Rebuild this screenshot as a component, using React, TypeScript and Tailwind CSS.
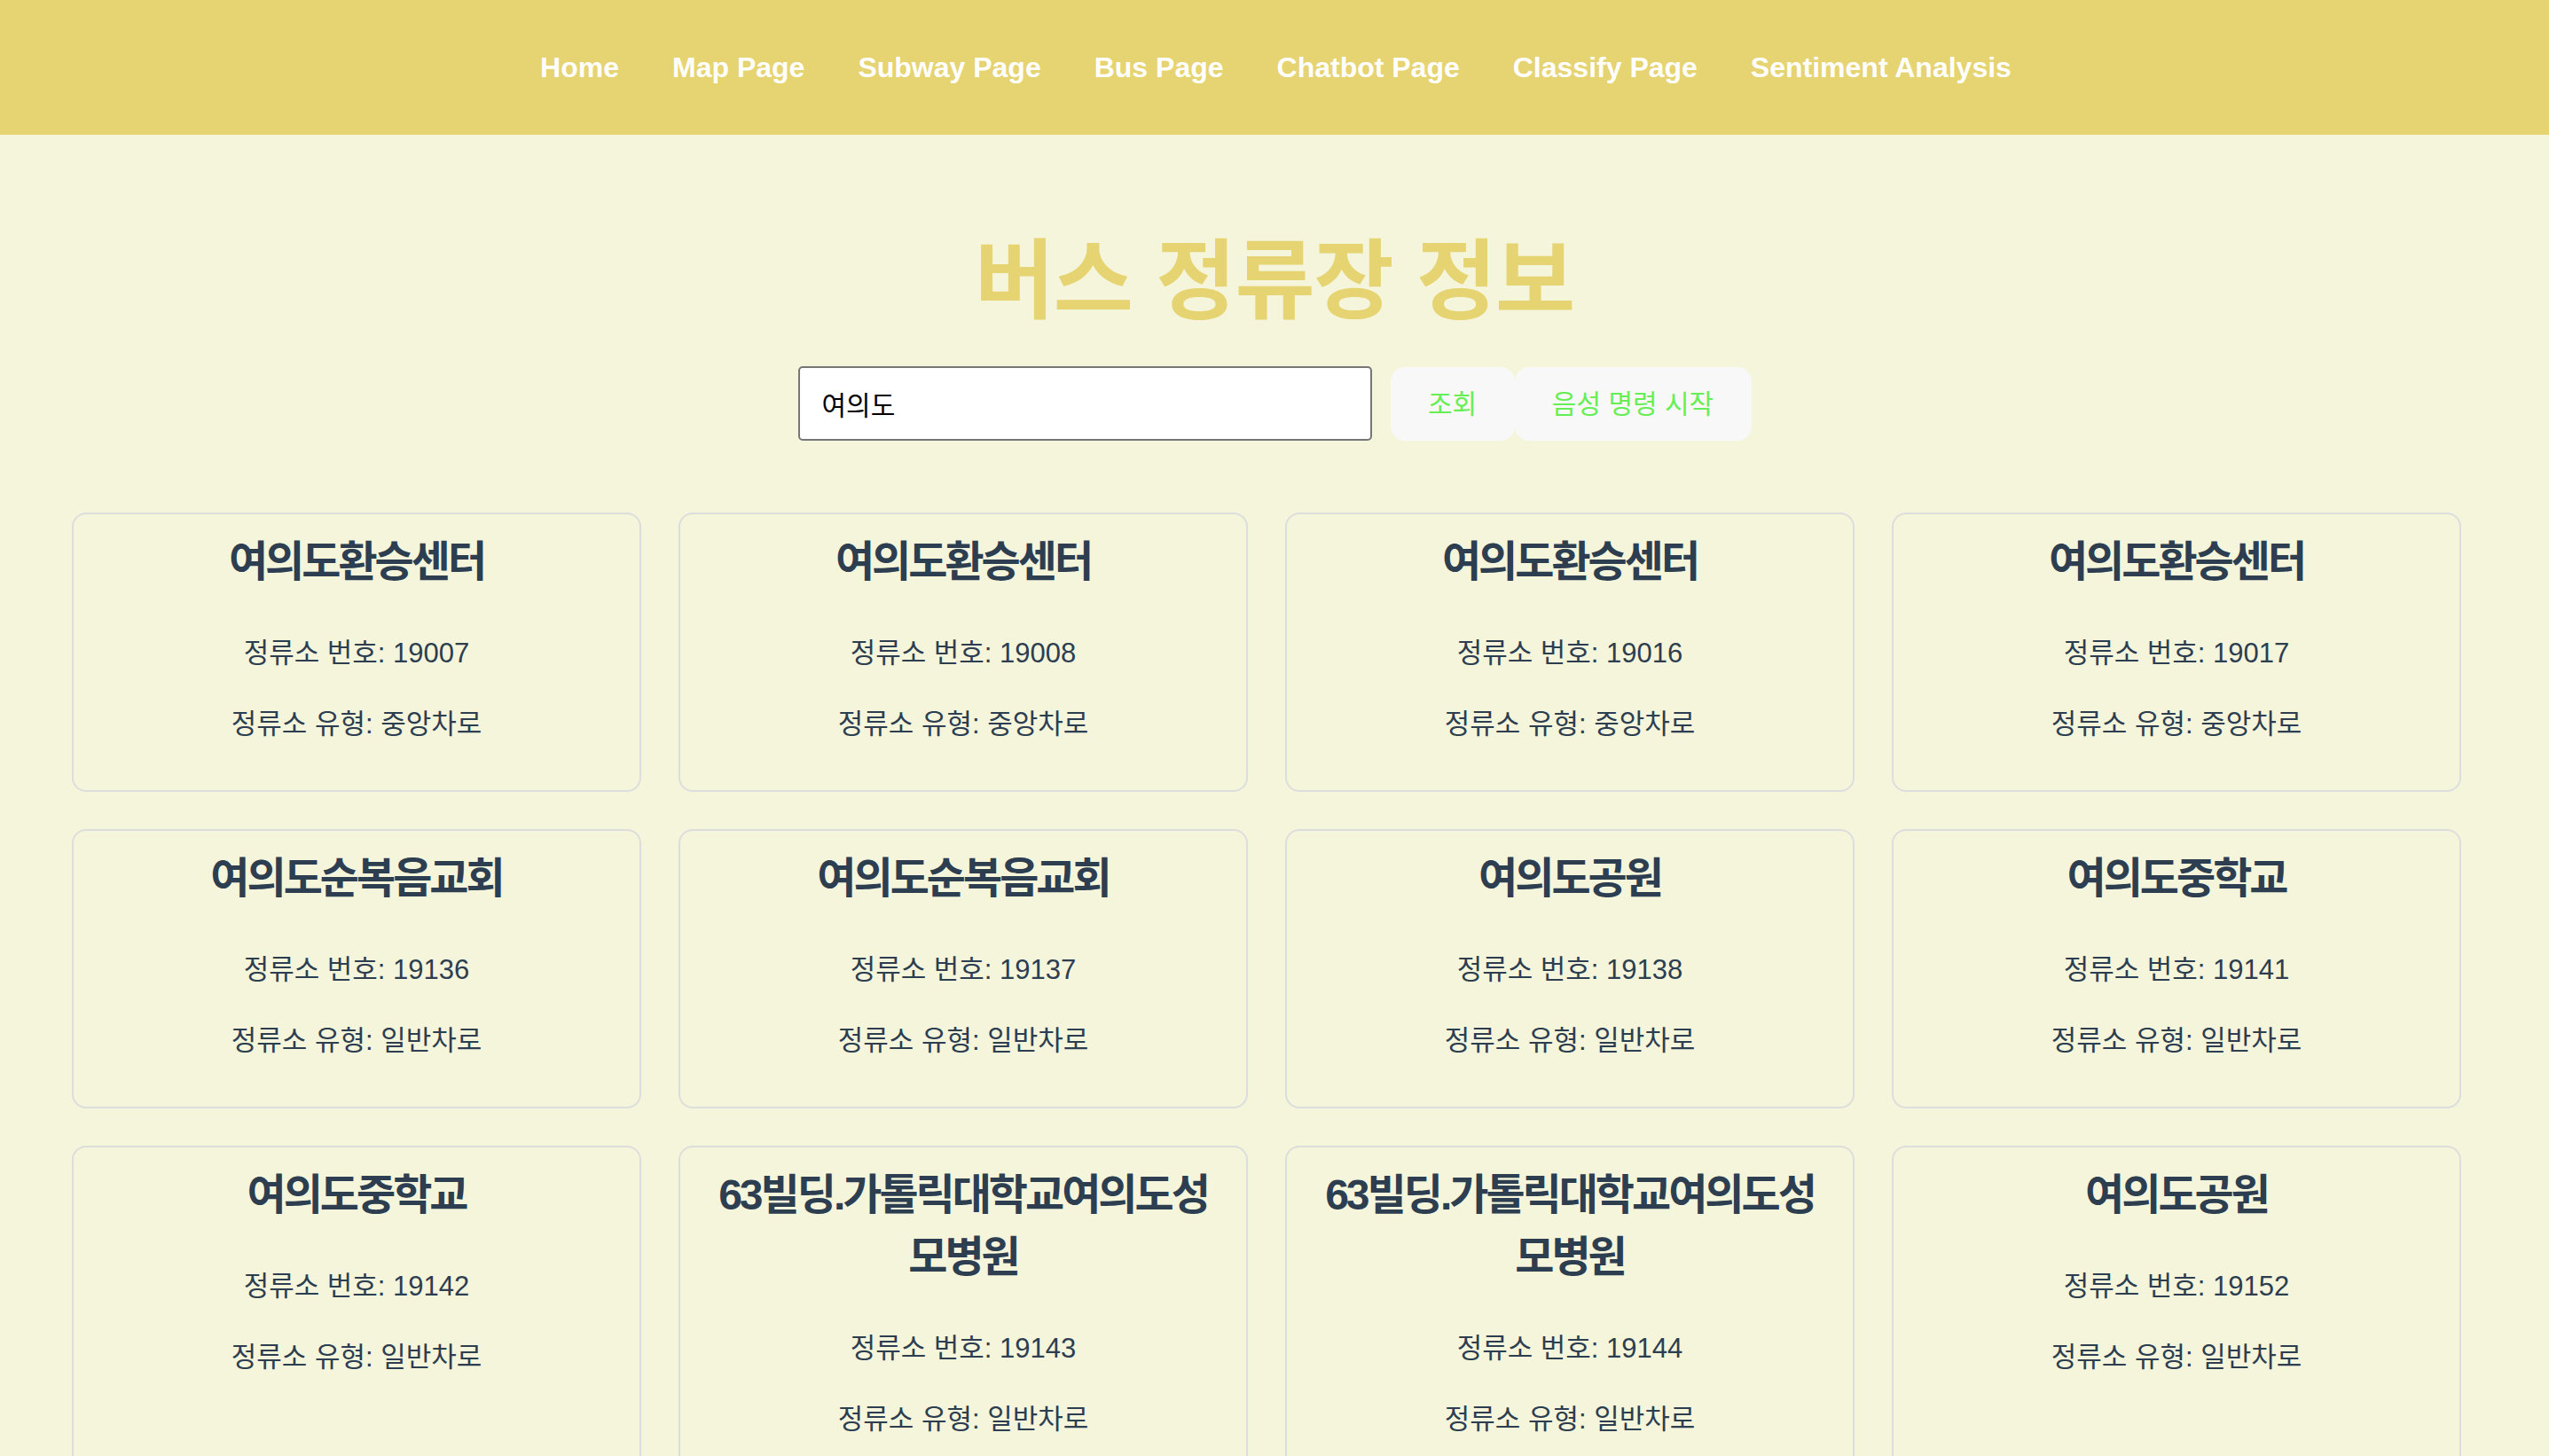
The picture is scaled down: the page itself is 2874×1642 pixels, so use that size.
import React from "react";

const FONT = { fontFamily: '"Liberation Sans", "Noto Sans CJK KR", sans-serif' };

const stops = [
  { name: "여의도환승센터", id: "19007", type: "중앙차로" },
  { name: "여의도환승센터", id: "19008", type: "중앙차로" },
  { name: "여의도환승센터", id: "19016", type: "중앙차로" },
  { name: "여의도환승센터", id: "19017", type: "중앙차로" },
  { name: "여의도순복음교회", id: "19136", type: "일반차로" },
  { name: "여의도순복음교회", id: "19137", type: "일반차로" },
  { name: "여의도공원", id: "19138", type: "일반차로" },
  { name: "여의도중학교", id: "19141", type: "일반차로" },
  { name: "여의도중학교", id: "19142", type: "일반차로" },
  { name: "63빌딩.가톨릭대학교여의도성모병원", id: "19143", type: "일반차로" },
  { name: "63빌딩.가톨릭대학교여의도성모병원", id: "19144", type: "일반차로" },
  { name: "여의도공원", id: "19152", type: "일반차로" },
];

const navItems = [
  "Home",
  "Map Page",
  "Subway Page",
  "Bus Page",
  "Chatbot Page",
  "Classify Page",
  "Sentiment Analysis",
];

export default function App() {
  return (
    <div className="min-h-screen bg-[#f5f5dc]" style={FONT}>
      <nav className="h-[152px] bg-[#e6d371] flex items-center justify-center gap-[60px] pl-[3px]">
        {navItems.map((n) => (
          <a key={n} className="text-white font-bold text-[32px] leading-none cursor-pointer">
            {n}
          </a>
        ))}
      </nav>

      <h1 className="mt-[110px] text-center text-[98px] leading-[110px] font-bold tracking-[-1px] text-[#e6d371]">
        버스 정류장 정보
      </h1>

      <div className="mt-[41px] flex justify-center items-center">
        <input
          defaultValue="여의도"
          className="w-[647px] h-[84px] border-2 border-[#767676] rounded-[5px] bg-white pl-[25px] pr-[21px] text-[30px] text-black outline-none"
          style={FONT}
        />
        <button className="ml-[21px] w-[140px] h-[83px] rounded-[16px] bg-[#f8f8f8] text-[30px] text-[#66ef55]">
          조회
        </button>
        <button className="w-[267px] h-[83px] rounded-[16px] bg-[#f8f8f8] text-[30px] text-[#66ef55]">
          음성 명령 시작
        </button>
      </div>

      <div className="mt-[81px] pl-[81px] pr-[99px] grid grid-cols-4 gap-[42px] pb-[60px]">
        {stops.map((s) => (
          <div
            key={s.id}
            className="border-2 border-[#dddddd] rounded-[16px] px-[30px] pt-[19px] pb-[54px] text-center text-[#2c3e50]"
          >
            <h3 className="text-[48px] leading-[70px] font-bold tracking-[-3px]">{s.name}</h3>
            <p className="mt-[48px] text-[31px] leading-[40px]">정류소 번호: {s.id}</p>
            <p className="mt-[40px] text-[31px] leading-[40px]">정류소 유형: {s.type}</p>
          </div>
        ))}
      </div>
    </div>
  );
}
